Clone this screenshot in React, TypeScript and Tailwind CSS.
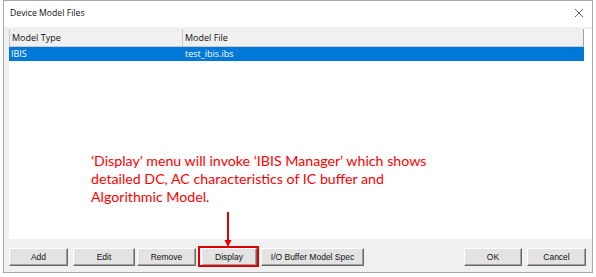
import React from 'react';

const buttons: { label: string; w: string; ml: string }[] = [
  { label: 'Add', w: 'w-[59px]', ml: 'ml-0' },
  { label: 'Edit', w: 'w-[62px]', ml: 'ml-[5px]' },
  { label: 'Remove', w: 'w-[59px]', ml: 'ml-[2px]' },
];

function WinButton({ label, className = '' }: { label: string; className?: string }) {
  return (
    <div
      className={`flex h-[18px] items-center justify-center border-b border-l border-r border-t border-b-[#696969] border-l-white border-r-[#696969] border-t-white bg-[#e3e3e3] text-[8.5px] text-[#111] shadow-[inset_-1px_-1px_0_#a0a0a0] ${className}`}
    >
      {label}
    </div>
  );
}

export default function App() {
  return (
    <div className="h-[277px] w-[596px] bg-white pl-[3px] font-['Liberation_Sans',Arial,sans-serif]">
      <div className="flex h-[273px] w-[590px] flex-col border border-[#a8a8a8] bg-[#f0f0f0]">
        {/* title bar */}
        <div className="flex h-[26px] items-center justify-between bg-white pl-[6px] pr-[8px]">
          <span className="font-['Open_Sans',sans-serif] text-[8.7px] text-[#111]">Device Model Files</span>
          <svg width="10" height="10" viewBox="0 0 10 10" className="mb-[2px]">
            <path d="M1 1 L9 9 M9 1 L1 9" stroke="#555" strokeWidth="0.9" />
          </svg>
        </div>

        <div className="flex flex-1 flex-col pl-[5px] pt-[2px]">
          {/* list view */}
          <div className="relative h-[210px] bg-white">
            <div className="grid w-[575px] grid-cols-[174px_1fr] font-['Open_Sans',sans-serif] text-[9px]">
              <div className="flex h-[18px] items-center border-b border-l border-r border-[#c8c8c8] bg-[#f0f0f0] pl-[2px] text-[#111]">
                Model Type
              </div>
              <div className="flex h-[18px] items-center border-b border-r border-[#c8c8c8] border-r-[#a0a0a0] bg-[#f0f0f0] pl-[2px] text-[#111]">
                Model File
              </div>
              <div className="flex h-[14px] items-center bg-[#0078d7] pl-[2px] text-white">IBIS</div>
              <div className="flex h-[14px] items-center bg-[#0078d7] pl-[2px] text-white">test_ibis.ibs</div>
            </div>

            {/* annotation */}
            <div className="absolute left-[82px] top-[123px] font-['Lato',sans-serif] text-[14.2px] leading-[18px] text-[#ff0000]">
              <p>‘Display’ menu will invoke ‘IBIS Manager’ which shows</p>
              <p>detailed DC, AC characteristics of IC buffer and</p>
              <p>Algorithmic Model.</p>
            </div>
            <svg className="absolute left-[215px] top-[183px]" width="8" height="36" viewBox="0 0 8 36">
              <path d="M4 0 V29" stroke="#e60000" strokeWidth="2" />
              <path d="M0.5 28 L7.5 28 L4 35 Z" fill="#e60000" />
            </svg>
          </div>

          {/* buttons */}
          <div className="mt-[9px] flex items-start">
            {buttons.map((b) => (
              <WinButton key={b.label} label={b.label} className={`${b.w} ${b.ml}`} />
            ))}
            <div className="relative ml-[5px]">
              <WinButton label="Display" className="w-[56px]" />
              <div className="absolute -left-[3px] -top-[2px] h-[21px] w-[61px] border-2 border-[#e00000]" />
            </div>
            <WinButton label="I/O Buffer Model Spec" className="ml-[4px] w-[103px]" />
            <WinButton label="OK" className="ml-[100px] w-[58px]" />
            <WinButton label="Cancel" className="ml-[5px] w-[59px]" />
          </div>
        </div>
      </div>
    </div>
  );
}
